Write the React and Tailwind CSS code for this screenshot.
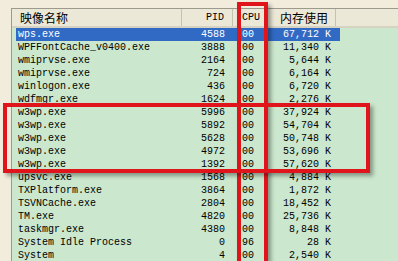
const rows = [
  ['wps.exe', '4588', '00', '67,712 K'],
  ['WPFFontCache_v0400.exe', '3888', '00', '11,340 K'],
  ['wmiprvse.exe', '2164', '00', '5,644 K'],
  ['wmiprvse.exe', '724', '00', '6,164 K'],
  ['winlogon.exe', '436', '00', '6,720 K'],
  ['wdfmgr.exe', '1624', '00', '2,276 K'],
  ['w3wp.exe', '5996', '00', '37,924 K'],
  ['w3wp.exe', '5892', '00', '54,704 K'],
  ['w3wp.exe', '5628', '00', '50,748 K'],
  ['w3wp.exe', '4972', '00', '53,696 K'],
  ['w3wp.exe', '1392', '00', '57,620 K'],
  ['upsvc.exe', '1568', '00', '4,884 K'],
  ['TXPlatform.exe', '3864', '00', '1,872 K'],
  ['TSVNCache.exe', '2804', '00', '18,452 K'],
  ['TM.exe', '4820', '00', '25,736 K'],
  ['taskmgr.exe', '4380', '00', '8,848 K'],
  ['System Idle Process', '0', '96', '28 K'],
  ['System', '4', '00', '2,540 K'],
];

const mono = { fontFamily: '"Liberation Mono", "Noto Sans CJK SC", monospace' };

export default function App() {
  return (
    <div
      className="relative w-[398px] h-[261px] overflow-hidden bg-[#f1ecdc] pt-[8px] pl-[11px] text-[10px] text-black"
      style={mono}
    >
      <div className="h-full border-l border-t border-[#9c9a8c] bg-[#cbe7cd]">
        {/* header */}
        <div className="flex h-[19px] items-center bg-[#ebe8d8] border-b-2 border-[#d6d2c2]">
          <div className="w-[170px] h-full flex items-center pl-[8px] border-r border-[#c5c2b2] text-[12px]" style={{ fontFamily: '"Noto Sans CJK SC", sans-serif' }}>
            映像名称
          </div>
          <div className="w-[51px] h-full flex items-center justify-end pr-[8px] border-r border-[#c5c2b2]">PID</div>
          <div className="w-[35px] h-full flex items-center pl-[9px]">CPU</div>
          <div className="w-[68px] h-full flex items-center justify-end pr-[7px] border-r border-[#c5c2b2] text-[12px]" style={{ fontFamily: '"Noto Sans CJK SC", sans-serif' }}>
            内存使用
          </div>
        </div>
        {/* rows */}
        <div className="flex flex-col">
          {rows.map((r, i) => (
            <div
              key={i}
              className={
                'flex h-[13px] items-center w-[324px] ml-[4px] leading-none ' +
                (i === 0 ? 'bg-[#316ac5] text-white' : '')
              }
            >
              <div className="w-[166px] pl-[2px] whitespace-pre">{r[0]}</div>
              <div className="w-[51px] text-right pr-[8px]">{r[1]}</div>
              <div className="w-[35px] pl-[9px]">{r[2]}</div>
              <div className="w-[68px] text-right pr-[5px] whitespace-pre">{r[3]}</div>
            </div>
          ))}
        </div>
      </div>

      {/* red highlight boxes */}
      <div className="absolute left-[237px] top-[2px] w-[31px] h-[280px] border-4 border-[#e0141b] shadow-[3px_3px_4px_rgba(0,0,0,0.35)]" />
      <div className="absolute left-[3px] top-[103px] w-[367px] h-[70px] border-4 border-[#e0141b] shadow-[3px_3px_4px_rgba(0,0,0,0.35)]" />
    </div>
  );
}
